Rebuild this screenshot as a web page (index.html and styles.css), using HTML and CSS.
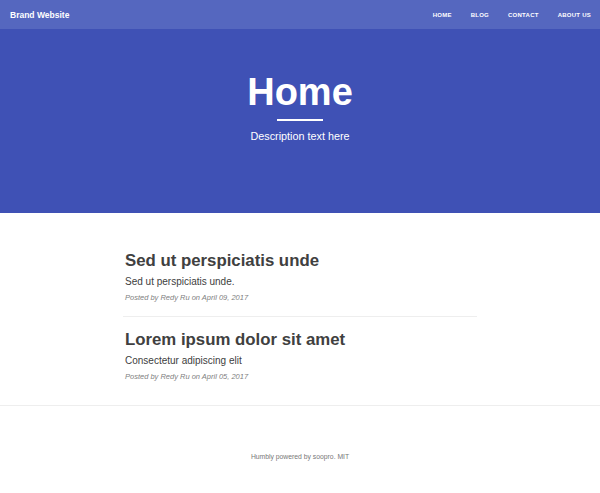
FILE: index.html
```html
<!DOCTYPE html>
<html>
<head>
<meta charset="utf-8">
<link rel="stylesheet" href="styles.css">
</head>
<body>
<header class="site-header">
  <nav class="navbar">
    <a class="brand" href="#">Brand Website</a>
    <ul class="nav-links">
      <li><a href="#">Home</a></li>
      <li><a href="#">Blog</a></li>
      <li><a href="#">Contact</a></li>
      <li><a href="#">About Us</a></li>
    </ul>
  </nav>
  <div class="hero">
    <h1 class="hero-title">Home</h1>
    <hr class="hero-rule">
    <p class="hero-desc">Description text here</p>
  </div>
</header>
<main class="posts">
  <article class="post">
    <h2 class="post-title">Sed ut perspiciatis unde</h2>
    <p class="post-subtitle">Sed ut perspiciatis unde.</p>
    <p class="post-meta">Posted by Redy Ru on April 09, 2017</p>
  </article>
  <hr class="post-sep">
  <article class="post">
    <h2 class="post-title">Lorem ipsum dolor sit amet</h2>
    <p class="post-subtitle">Consectetur adipiscing elit</p>
    <p class="post-meta">Posted by Redy Ru on April 05, 2017</p>
  </article>
</main>
<footer class="site-footer">
  <p class="footer-text">Humbly powered by <a href="#">soopro</a>. MIT</p>
</footer>
</body>
</html>
```
FILE: styles.css
```css
* { box-sizing: border-box; }
html, body { margin: 0; padding: 0; background: #fff; }
body { font-family: "Liberation Sans", Arial, sans-serif; color: #404040; }
a { text-decoration: none; color: inherit; }

.site-header { background: #3f51b5; }
.navbar {
  height: 29px;
  background: #5567bf;
  display: flex;
  align-items: center;
  justify-content: space-between;
  padding: 0 9px 0 10px;
}
.brand { color: #fff; font-weight: bold; font-size: 8.5px; line-height: 10px; }
.nav-links { list-style: none; margin: 0; padding: 0; display: flex; gap: 19px; font-size: 6px; line-height: 8px; }
.nav-links a { color: #fff; font-weight: bold; text-transform: uppercase; letter-spacing: 0.25px; }

.hero {
  height: 184px;
  display: flex;
  flex-direction: column;
  align-items: center;
  padding-top: 41px;
  color: #fff;
}
.hero-title { margin: 0; font-size: 38px; font-weight: bold; line-height: 44px; }
.hero-rule { width: 46px; border: 0; border-top: 2px solid #fff; margin: 5px 0 0; }
.hero-desc { margin: 8px 0 0; font-size: 10.8px; line-height: 14px; }

.posts { width: 354px; margin: 0 auto; padding: 37px 0 23px 2px; }
.post-title { margin: 0; font-size: 16.8px; font-weight: bold; line-height: 22px; color: #404040; }
.post-subtitle { margin: 2px 0 0; font-size: 10px; line-height: 15px; color: #404040; font-weight: normal; }
.post-meta { margin: 4px 0 0; font-size: 7.5px; font-style: italic; color: #808080; line-height: 10px; }
.post-sep { border: 0; border-top: 1px solid #eee; margin: 13px 0 12px -2px; }

.site-footer { border-top: 1px solid #eee; padding-top: 46px; height: 88px; text-align: center; }
.footer-text { margin: 0; font-size: 6.8px; color: #777; line-height: 10px; }
.footer-text a { color: #777; }
```
